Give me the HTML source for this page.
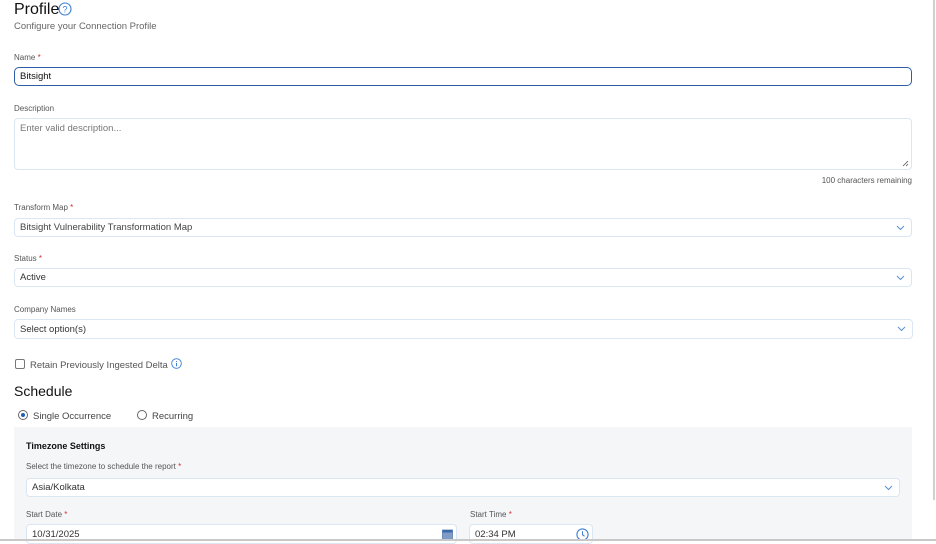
<!DOCTYPE html>
<html><head><style>
*{box-sizing:border-box;margin:0;padding:0}
body{width:936px;height:541px;overflow:hidden;background:#fff;font-family:"Liberation Sans",Arial,sans-serif;position:relative;color:#222}
.a{position:absolute}
.lbl{font-size:8px;color:#555}
.req{color:#d32f2f}
.box{position:absolute;border:1px solid #dbe6f3;border-radius:4px;background:#fff;font-size:9.5px;color:#333;padding-left:5px;display:flex;align-items:center}
.chev{position:absolute;right:6px;top:50%;margin-top:-3px}
</style></head><body>
<div class="a" style="left:14px;top:1px;font-size:16px;color:#111">Profile</div>
<svg class="a" style="left:58px;top:2px" width="14" height="14" viewBox="0 0 14 14"><circle cx="7" cy="7" r="6" fill="none" stroke="#3d7fd1" stroke-width="1.1"/><text x="7" y="10.5" font-size="9" text-anchor="middle" fill="#3d7fd1" font-family="Liberation Sans">?</text></svg>
<div class="a" style="left:14px;top:21px;font-size:9.5px;color:#666">Configure your Connection Profile</div>

<div class="a lbl" style="left:14px;top:53px">Name <span class="req">*</span></div>
<div class="box" style="left:14px;top:67px;width:898px;height:19px;border:1.5px solid #2c5ea8;border-radius:5px;color:#111">Bitsight</div>

<div class="a lbl" style="left:14px;top:104px">Description</div>
<div class="box" style="left:14px;top:118px;width:898px;height:52px;align-items:flex-start;padding-top:4px;color:#777">Enter valid description...
<svg class="a" style="right:2px;bottom:2px" width="7" height="7"><path d="M1 6L6 1M4 6L6 4" stroke="#555" stroke-width="0.8"/></svg></div>
<div class="a" style="right:24px;top:176px;font-size:8px;color:#555">100 characters remaining</div>

<div class="a lbl" style="left:14px;top:203px">Transform Map <span class="req">*</span></div>
<div class="box" style="left:14px;top:218px;width:898px;height:19px;color:#444">Bitsight Vulnerability Transformation Map<svg class="chev" width="9" height="6"><path d="M1 1L4.5 4.5L8 1" fill="none" stroke="#5b8fd3" stroke-width="1"/></svg></div>

<div class="a lbl" style="left:14px;top:254px">Status <span class="req">*</span></div>
<div class="box" style="left:14px;top:268px;width:898px;height:19px">Active<svg class="chev" width="9" height="6"><path d="M1 1L4.5 4.5L8 1" fill="none" stroke="#5b8fd3" stroke-width="1"/></svg></div>

<div class="a lbl" style="left:14px;top:305px">Company Names</div>
<div class="box" style="left:14px;top:319px;width:899px;height:20px">Select option(s)<svg class="chev" width="9" height="6"><path d="M1 1L4.5 4.5L8 1" fill="none" stroke="#5b8fd3" stroke-width="1"/></svg></div>

<div class="a" style="left:15px;top:359px;width:10px;height:10px;border:1px solid #777;border-radius:2px"></div>
<div class="a" style="left:30px;top:360px;font-size:9.5px;color:#555">Retain Previously Ingested Delta</div>
<svg class="a" style="left:171px;top:358px" width="11" height="11"><circle cx="5.5" cy="5.5" r="4.8" fill="none" stroke="#3d7fd1" stroke-width="0.9"/><path d="M5.5 3v1M5.5 5v3.3" stroke="#3d7fd1" stroke-width="1"/></svg>

<div class="a" style="left:14px;top:383px;font-size:14px;color:#111">Schedule</div>
<div class="a" style="left:18px;top:410px;width:10px;height:10px;border:1px solid #666;border-radius:50%"><div style="position:absolute;left:2px;top:2px;width:4px;height:4px;border-radius:50%;background:#1f5fb8"></div></div>
<div class="a" style="left:33px;top:411px;font-size:9.5px;color:#444">Single Occurrence</div>
<div class="a" style="left:137px;top:410px;width:10px;height:10px;border:1px solid #666;border-radius:50%"></div>
<div class="a" style="left:152px;top:411px;font-size:9.5px;color:#444">Recurring</div>

<div class="a" style="left:14px;top:427px;width:898px;height:114px;background:#f5f6f8"></div>
<div class="a" style="left:26px;top:441px;font-size:9px;font-weight:bold;color:#111">Timezone Settings</div>
<div class="a lbl" style="left:26px;top:462px">Select the timezone to schedule the report <span class="req">*</span></div>
<div class="box" style="left:26px;top:478px;width:874px;height:19px">Asia/Kolkata<svg class="chev" width="9" height="6"><path d="M1 1L4.5 4.5L8 1" fill="none" stroke="#5b8fd3" stroke-width="1"/></svg></div>
<div class="a lbl" style="left:26px;top:510px">Start Date <span class="req">*</span></div>
<div class="box" style="left:26px;top:524px;width:431px;height:20px">10/31/2025
<svg class="a" style="right:3px;top:4px" width="11" height="11"><rect x="0.5" y="1" width="10" height="9.5" fill="#7e9cc6" stroke="#5a7fb5" stroke-width="0.8"/><rect x="0.5" y="1" width="10" height="2.5" fill="#3f6aa8"/></svg></div>
<div class="a lbl" style="left:470px;top:510px">Start Time <span class="req">*</span></div>
<div class="box" style="left:469px;top:524px;width:124px;height:20px">02:34 PM
<svg class="a" style="right:3px;top:3px" width="13" height="13"><circle cx="6.5" cy="6.5" r="5.6" fill="none" stroke="#3d7fd1" stroke-width="1.1"/><path d="M6.5 3.3v3.4l2 1.6" fill="none" stroke="#3d7fd1" stroke-width="1"/></svg></div>

<div class="a" style="left:0;top:539px;width:936px;height:2px;background:#c8c8c8"></div>
<div class="a" style="left:933px;top:0;width:2px;height:500px;background:#d0d0d0"></div>
</body></html>
